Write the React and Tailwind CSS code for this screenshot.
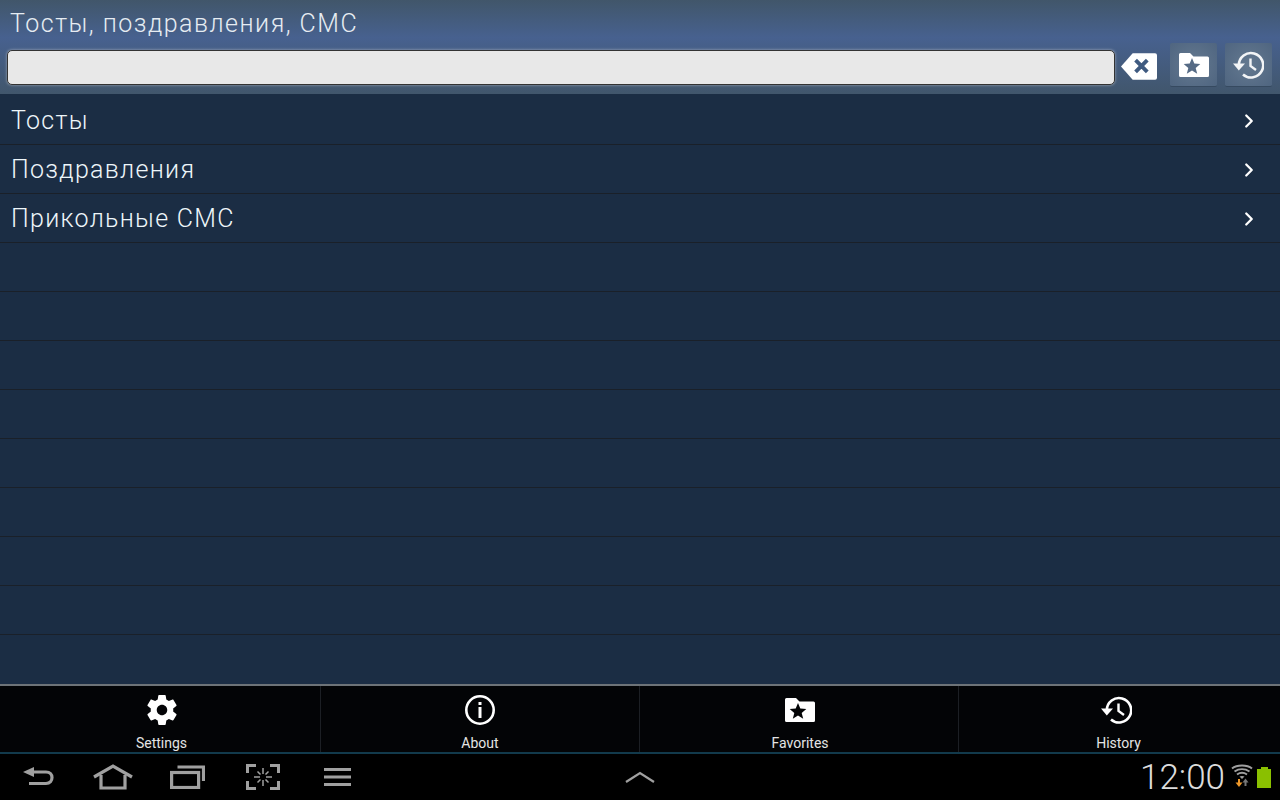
import React from 'react';
import { ChevronRight } from 'lucide-react';

const roboto = { fontFamily: '"Roboto", "Liberation Sans", sans-serif' };

function GearIcon({ className }) {
  return (
    <svg viewBox="0 0 24 24" className={className} fill="currentColor">
      <path d="M19.43 12.98c.04-.32.07-.64.07-.98s-.03-.66-.07-.98l2.11-1.65c.19-.15.24-.42.12-.64l-2-3.46c-.12-.22-.39-.3-.61-.22l-2.49 1c-.52-.4-1.08-.73-1.69-.98l-.38-2.65C14.46 2.18 14.25 2 14 2h-4c-.25 0-.46.18-.49.42l-.38 2.65c-.61.25-1.17.59-1.69.98l-2.49-1c-.23-.09-.49 0-.61.22l-2 3.46c-.13.22-.07.49.12.64l2.11 1.65c-.04.32-.07.65-.07.98s.03.66.07.98l-2.11 1.65c-.19.15-.24.42-.12.64l2 3.46c.12.22.39.3.61.22l2.49-1c.52.4 1.08.73 1.69.98l.38 2.65c.03.24.24.42.49.42h4c.25 0 .46-.18.49-.42l.38-2.65c.61-.25 1.17-.59 1.69-.98l2.49 1c.23.09.49 0 .61-.22l2-3.46c.12-.22.07-.49-.12-.64l-2.11-1.65zM12 15.5c-1.93 0-3.5-1.57-3.5-3.5s1.57-3.5 3.5-3.5 3.5 1.57 3.5 3.5-1.57 3.5-3.5 3.5z" />
    </svg>
  );
}

function InfoIcon({ className }) {
  return (
    <svg viewBox="0 0 30 30" className={className} fill="none" stroke="currentColor">
      <circle cx="15" cy="15" r="13.7" strokeWidth="2.6" />
      <rect x="13.5" y="7" width="3" height="3" fill="currentColor" stroke="none" />
      <rect x="13.5" y="12" width="3" height="11" fill="currentColor" stroke="none" />
    </svg>
  );
}

function FolderStar({ className, starClass }) {
  return (
    <svg viewBox="0 0 30 24" className={className}>
      <path fill="currentColor" d="M1.5 0h9.5l3.500 3.500h14a1.500 1.500 0 0 1 1.500 1.500v17.500a1.500 1.500 0 0 1-1.500 1.500h-27A1.500 1.500 0 0 1 0 22.500V1.500A1.500 1.500 0 0 1 1.500 0z" />
      <path className={starClass} d="M13 5l2.300 5.600 6 .4-4.600 3.900 1.500 5.900L13 17.600l-5.200 3.200 1.500-5.900L4.700 11l6-.4z" />
    </svg>
  );
}

function HistoryIcon({ className }) {
  return (
    <svg viewBox="0 0 31 28" className={className} fill="none" stroke="currentColor">
      <path strokeWidth="2.6" d="M5.800 14A12.200 12.200 0 1 1 10 23.500" />
      <path fill="currentColor" stroke="none" d="M0 12.500h12L5.800 19.500z" />
      <path strokeWidth="2.400" d="M17.500 7.500v7.500l5.500 4" />
    </svg>
  );
}

function ListRow({ label }) {
  return (
    <div className="h-[49px] flex items-center justify-between border-b border-[#1a2029] pl-[11px] pr-[20px]">
      <span className="mt-[2px] text-[25px] font-light tracking-[1.3px] text-[#eef6fa]">{label}</span>
      <ChevronRight className="mt-[2px] w-[22px] h-[22px] text-white" strokeWidth={2.5} />
    </div>
  );
}

function TabItem({ label, icon, className }) {
  return (
    <div className={`flex flex-col items-center ${className}`}>
      <div className="h-[36px] mt-[6px] flex items-center justify-center text-white">{icon}</div>
      <span className="mt-[7px] text-[14px] leading-[16px] text-[#e4e4e4]">{label}</span>
    </div>
  );
}

function NavIcons() {
  return (
    <div className="flex items-center text-[#a0a0a0]">
      <svg viewBox="0 0 32 24" className="w-[32px] h-[24px]" fill="none" stroke="currentColor" strokeWidth="3.2">
        <path d="M8 7h15c4 0 6 2.500 6 5.500s-2 6-6 6H6" />
        <path fill="currentColor" stroke="none" d="M0 7l11-5v10z" />
      </svg>
      <svg viewBox="0 0 40 26" className="ml-[38px] w-[40px] h-[26px]" fill="none" stroke="currentColor" strokeWidth="3.2">
        <path d="M1 13L20 2l19 11" />
        <path d="M8 11v13h24V11" />
      </svg>
      <svg viewBox="0 0 35 24" className="ml-[37px] w-[35px] h-[24px]" fill="none" stroke="currentColor" strokeWidth="3.2">
        <rect x="1.600" y="7.500" width="27" height="15" />
        <path d="M7.500 2h26v14" />
      </svg>
      <svg viewBox="0 0 34 26" className="ml-[41px] w-[34px] h-[26px]" fill="none" stroke="currentColor">
        <path strokeWidth="3" d="M10 1.500H1.500V9M24 1.500h8.500V9M10 24.500H1.500V17M24 24.500h8.500V17" />
        <path strokeWidth="1.500" d="M17 4v6M17 16v6M8 13h6M20 13h6M11.500 7.500l3 3M22.500 7.500l-3 3M11.500 18.500l3-3M22.500 18.500l-3-3" />
      </svg>
      <svg viewBox="0 0 27 18" className="ml-[44px] w-[27px] h-[18px]" fill="currentColor">
        <rect y="0" width="27" height="3" />
        <rect y="7.500" width="27" height="3" />
        <rect y="15" width="27" height="3" />
      </svg>
    </div>
  );
}

function StatusArea() {
  return (
    <div className="flex items-center">
      <span className="text-[35px] leading-none font-light text-[#dcdcdc]">12:00</span>
      <svg viewBox="0 0 22 26" className="w-[22px] h-[26px] ml-[6px]" fill="none">
        <path stroke="#a0a0a0" strokeWidth="2" d="M1 4.500c5-4 15-4 20 0M3.500 7.500c4.500-3 10.500-3 15 0M6 10.500c3-2 7-2 10 0" />
        <path fill="#a0a0a0" d="M8.500 12.500c1-.7 4-.7 5 0L11 15z" />
        <path stroke="#777777" strokeWidth="2" d="M14.500 22v-4" />
        <path fill="#777777" d="M11.500 18.500l3-4 3 4z" />
        <path stroke="#f0992a" strokeWidth="2" d="M8 15v4" />
        <path fill="#f0992a" d="M4.500 18.500h7L8 23z" />
      </svg>
      <div className="ml-[4px] flex flex-col items-center">
        <div className="w-[7px] h-[2px] bg-[#8ac000]" />
        <div className="w-[14px] h-[19px] bg-[#8ac000]" />
      </div>
    </div>
  );
}

export default function App() {
  const rows = ['Тосты', 'Поздравления', 'Прикольные СМС', '', '', '', '', '', '', '', ''];

  return (
    <div className="w-[1280px] h-[800px] flex flex-col overflow-hidden bg-[#1b2d44]" style={roboto}>
      {/* top bar */}
      <header className="h-[94px] bg-gradient-to-b from-[#41566a] via-[#47618f] via-40% to-[#41566c] shrink-0">
        <div className="h-[43px] pt-[9px] pl-[10px] text-[25px] leading-[30px] font-light tracking-[1.5px] text-[#e6ecf2]">
          Тосты, поздравления, СМС
        </div>
        <div className="flex items-start pl-[7px] pr-[8px]">
          <div className="mt-[7px] w-[1108px] h-[35px] rounded-[5px] bg-[#e8e8e8] border border-[#333] shadow-[0_0_3px_rgba(230,230,230,0.6)]" />
          <svg viewBox="0 0 37 27" className="mt-[10px] w-[36px] h-[27px] ml-[6px]">
            <path fill="#fff" d="M12 0h23a2 2 0 0 1 2 2v23a2 2 0 0 1-2 2H12L0 13.500z" />
            <path stroke="#3f5a80" strokeWidth="4" d="M15 7l12 12M27 7L15 19" />
          </svg>
          <div className="ml-[13px] w-[47px] h-[44px] flex items-center justify-center rounded-[2px] bg-[radial-gradient(circle,#647990,#4f6580)] border-b border-[#364a60] text-white">
            <FolderStar className="w-[30px] h-[24px]" starClass="fill-[#566b85]" />
          </div>
          <div className="ml-[8px] w-[47px] h-[44px] flex items-center justify-center rounded-[2px] bg-[radial-gradient(circle,#647990,#4f6580)] border-b border-[#364a60] text-[#f2f4f6]">
            <HistoryIcon className="w-[31px] h-[28px]" />
          </div>
        </div>
      </header>

      {/* list */}
      <main className="flex-1 min-h-0 overflow-hidden pt-[2px]">
        {rows.map((label, i) => (
          label ? <ListRow key={i} label={label} /> : <div key={i} className="h-[49px] border-b border-[#1a2029]" />
        ))}
      </main>

      {/* bottom tabs */}
      <nav className="h-[70px] shrink-0 flex bg-[#030406] border-t-2 border-[#6d7378] border-b-2 border-b-[#123a4c]">
        <TabItem label="Settings" icon={<GearIcon className="w-[36px] h-[36px]" />} className="w-[321px] pl-[3px] border-r border-[#1c1f24]" />
        <TabItem label="About" icon={<InfoIcon className="w-[30px] h-[30px]" />} className="w-[319px] border-r border-[#1c1f24]" />
        <TabItem label="Favorites" icon={<FolderStar className="w-[30px] h-[24px]" starClass="fill-[#030406]" />} className="w-[319px] pl-[2px] border-r border-[#1c1f24]" />
        <TabItem label="History" icon={<HistoryIcon className="w-[31px] h-[28px] mr-[4px]" />} className="flex-1 pr-[2px]" />
      </nav>

      {/* system bar */}
      <footer className="h-[46px] shrink-0 bg-black grid grid-cols-3 items-center px-[23px]">
        <NavIcons />
        <div className="flex justify-center text-[#a0a0a0]">
          <svg viewBox="0 0 30 12" className="w-[30px] h-[12px]" fill="none" stroke="currentColor" strokeWidth="2.2">
            <path d="M1 11L15 2l14 9" />
          </svg>
        </div>
        <div className="flex justify-end mr-[-14px]">
          <StatusArea />
        </div>
      </footer>
    </div>
  );
}
